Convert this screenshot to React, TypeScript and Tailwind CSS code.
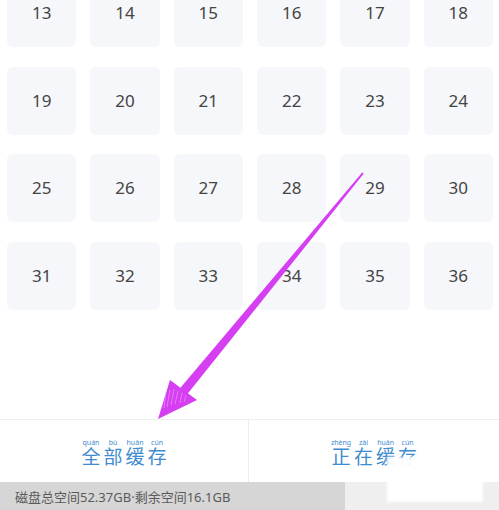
import React from 'react';

const days = Array.from({ length: 24 }, (_, i) => i + 13);

const Pinyin = ({ items }: { items: [string, string][] }) => (
  <div className="text-[19px] leading-[22px] text-[#3f8bcf]">
    {items.map(([py, ch], i) => (
      <ruby key={ch} className={i > 0 ? 'ml-[3px]' : ''}>
        {ch}
        <rt className="text-[7px] leading-[9px] text-[#3f8bcf]">{py}</rt>
      </ruby>
    ))}
  </div>
);

const Arrow = () => (
  <svg className="absolute inset-0 pointer-events-none" width="499" height="510" viewBox="0 0 499 510">
    <polygon points="362.2,172.4 363.8,173.6 186.6,394.9 179.4,389.1" fill="#d63ef2" />
    <polygon points="158,419 170,380 197,400" fill="#d63ef2" />
    <g stroke="#f2a6ff" strokeWidth="0.7" opacity="0.8">
      <line x1="166" y1="392" x2="164" y2="408" />
      <line x1="170" y1="390" x2="167" y2="407" />
      <line x1="174" y1="389" x2="171" y2="405" />
      <line x1="178" y1="391" x2="175" y2="404" />
      <line x1="182" y1="393" x2="180" y2="403" />
      <line x1="186" y1="395" x2="184" y2="402" />
    </g>
  </svg>
);

export default function App() {
  return (
    <div className="relative w-full h-[510px] overflow-hidden bg-white flex flex-col" style={{ fontFamily: '"Noto Sans", "Noto Sans CJK SC", sans-serif' }}>
      <div className="grid grid-cols-6 gap-x-[14px] gap-y-[19.5px] pl-[7px] pr-[6px] -mt-[21px]">
        {days.map((d) => (
          <div key={d} className="h-[68px] rounded-[6px] bg-[#f6f7fa] flex items-center justify-center text-[17px] text-[#444]">
            {d}
          </div>
        ))}
      </div>
      <div className="flex-1" />
      <div className="h-[63px] flex border-t border-[#eeeeee]">
        <div className="w-[249px] border-r border-[#eeeeee] flex items-center justify-center pt-[4px]">
          <Pinyin items={[['quán', '全'], ['bù', '部'], ['huǎn', '缓'], ['cún', '存']]} />
        </div>
        <div className="flex-1 flex items-center justify-center pt-[4px]">
          <Pinyin items={[['zhèng', '正'], ['zài', '在'], ['huǎn', '缓'], ['cún', '存']]} />
        </div>
      </div>
      <div className="h-[28px] flex">
        <div className="w-[345px] bg-[#d6d6d6] flex items-center pl-[15px] pt-[3px] text-[13px] text-[#5a5a5a]">
          磁盘总空间52.37GB·剩余空间16.1GB
        </div>
        <div className="flex-1 bg-[#efefef]" />
      </div>
      <Arrow />
      <div className="absolute left-[387px] top-[457px] w-[96px] h-[45px] bg-white/95 blur-[1px]" />
    </div>
  );
}
